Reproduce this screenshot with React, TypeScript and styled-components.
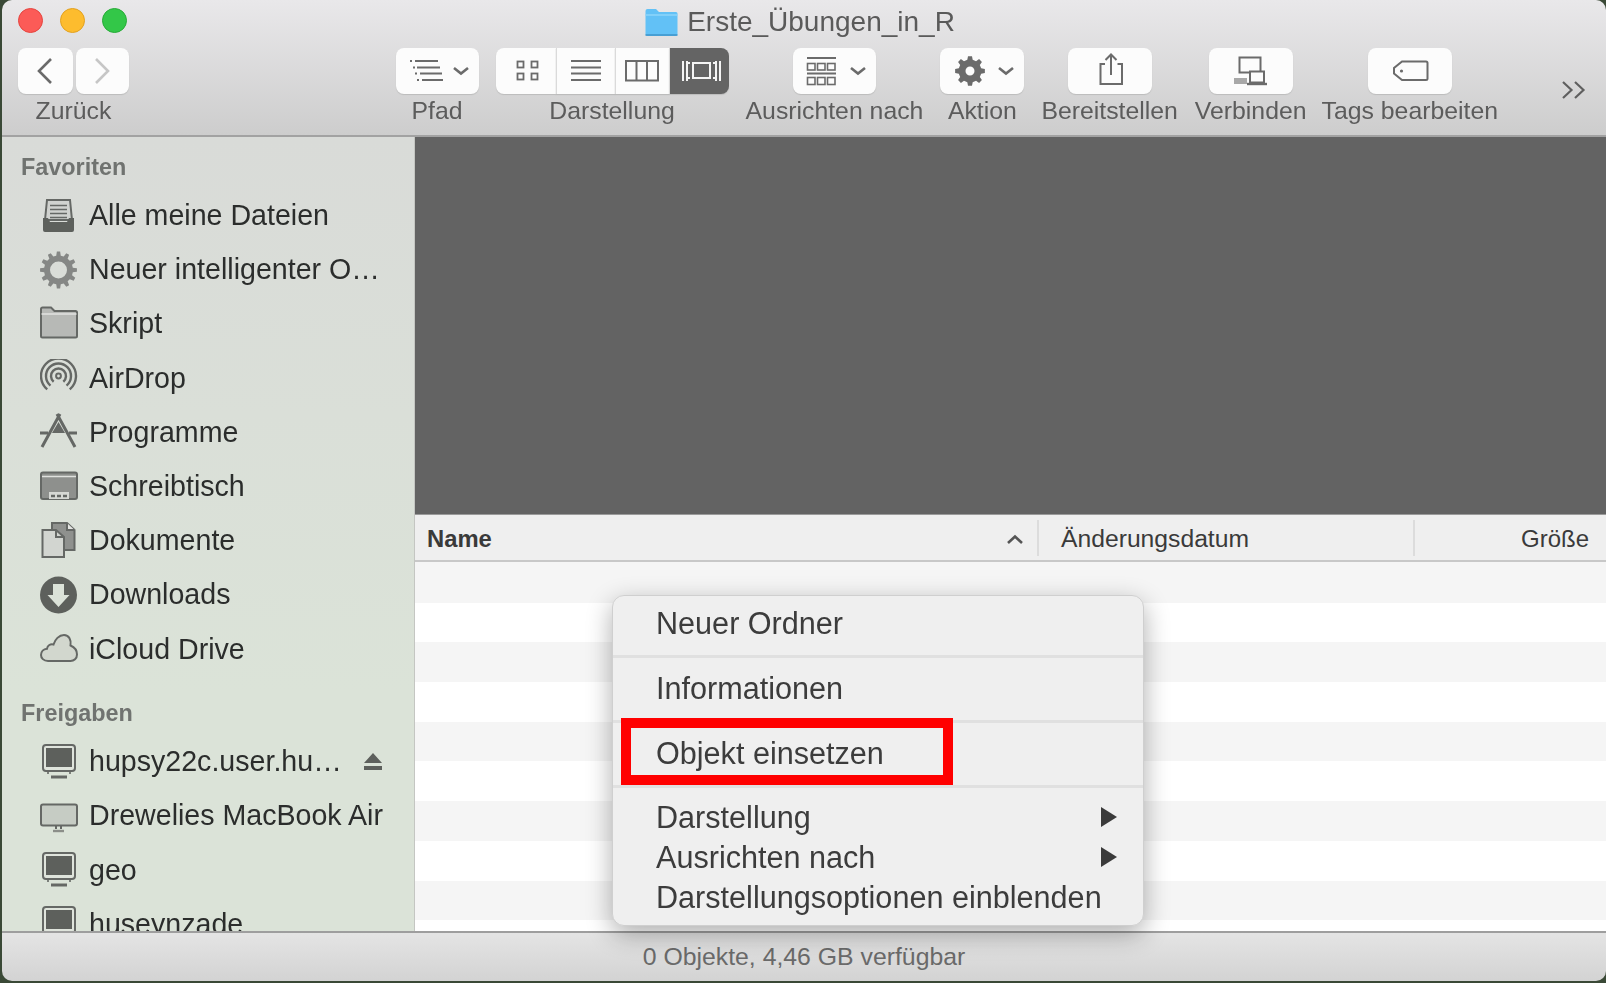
import styled, { createGlobalStyle } from "styled-components";

const ICON = "#6b6b6b";
const SIDE_ICON = "#656865";
const SIDE_DARK = "#5d605c";

const GlobalStyle = createGlobalStyle`
  html, body {
    margin: 0;
    padding: 0;
    background: #3a4936;
  }
  * {
    box-sizing: border-box;
  }
`;

const Frame = styled.div`
  position: relative;
  width: 1606px;
  height: 983px;
  overflow: hidden;
  background: #3a4936;
  font-family: "Liberation Sans", Arial, sans-serif;
`;

const Window = styled.div`
  position: relative;
  display: flex;
  flex-direction: column;
  width: 1604px;
  height: 981px;
  margin-left: 2px;
  border-radius: 10px;
  overflow: hidden;
  filter: blur(0.55px);
`;

const Toolbar = styled.header`
  display: flex;
  flex-direction: column;
  height: 137px;
  flex-shrink: 0;
  background: linear-gradient(#e9e8ea, #cdcdcd);
  border-bottom: 2px solid #a2a2a2;
`;

const TitleBar = styled.div`
  display: grid;
  grid-template-columns: 1fr auto 1fr;
  align-items: center;
  height: 48px;
  padding-left: 16px;
`;

const Lights = styled.div`
  display: flex;
  gap: 17px;
  margin-top: -7px;
`;

const Light = styled.span<{ $color: string; $edge: string }>`
  width: 25px;
  height: 25px;
  border-radius: 50%;
  background: ${({ $color }) => $color};
  border: 1px solid ${({ $edge }) => $edge};
`;

const Title = styled.div`
  display: flex;
  align-items: center;
  gap: 9px;
  margin-top: -5px;
  margin-right: 24px;
  font-size: 28px;
  color: #5a5a5a;
`;

const ToolRow = styled.div`
  display: flex;
  padding: 0 19px 0 16px;
  gap: 17px;
`;

const Spacer = styled.div`
  flex: 1;
`;

const Group = styled.div`
  display: flex;
  flex-direction: column;
  align-items: center;
`;

const TagsGroup = styled(Group)`
  margin-left: -2px;
`;

const ButtonRow = styled.div<{ $gap?: number }>`
  display: flex;
  gap: ${({ $gap }) => $gap ?? 0}px;
`;

const ToolButton = styled.div<{ $w: number; $active?: boolean; $left?: boolean; $right?: boolean; $joined?: boolean }>`
  display: block;
  width: ${({ $w }) => $w}px;
  height: 46px;
  background: ${({ $active }) => ($active ? "#646464" : "#fcfcfc")};
  border-radius: ${({ $joined, $left, $right }) =>
    $joined ? `${$left ? 8 : 0}px ${$right ? 8 : 0}px ${$right ? 8 : 0}px ${$left ? 8 : 0}px` : "8px"};
  border-left: ${({ $joined, $left }) => ($joined && !$left ? "1px solid #dadada" : "none")};
  box-shadow: 0 1px 1px #bcbcbc;

  svg {
    display: block;
  }
`;

const ToolLabel = styled.div`
  height: 30px;
  margin-top: 2px;
  font-size: 24.8px;
  line-height: 30px;
  color: #5c5c5c;
  white-space: nowrap;
`;

const More = styled.div`
  align-self: flex-start;
  margin: 33px 0 0 47px;

  svg {
    display: block;
  }
`;

const Main = styled.div`
  display: flex;
  flex: 1;
  min-height: 0;
`;

const Sidebar = styled.nav`
  width: 413px;
  flex-shrink: 0;
  padding-top: 12px;
  overflow: hidden;
  background: linear-gradient(#d9dbd8, #dbe3d8 70%);
  border-right: 1px solid #c4c6c2;
`;

const SectionLabel = styled.div<{ $spaced?: boolean }>`
  height: 36px;
  margin: ${({ $spaced }) => ($spaced ? "19px" : "0")} 0 3.5px 19px;
  font-size: 23.4px;
  font-weight: 700;
  line-height: 36px;
  color: #707370;
`;

const SideRow = styled.div`
  display: flex;
  align-items: center;
  gap: 11px;
  height: 54.2px;
  padding: 0 32px 0 38px;
  font-size: 28.6px;
  color: #2b2d2c;
  white-space: nowrap;

  svg {
    flex-shrink: 0;
  }
`;

const Eject = styled.svg`
  margin-left: auto;
`;

const Content = styled.section`
  position: relative;
  display: flex;
  flex-direction: column;
  flex: 1;
  min-width: 0;
`;

const Preview = styled.div`
  height: 378px;
  flex-shrink: 0;
  background: #636363;
  border-bottom: 1px solid #9a9a9a;
`;

const ListHeader = styled.div`
  display: grid;
  grid-template-columns: 624px 376px 1fr;
  align-items: center;
  height: 47px;
  flex-shrink: 0;
  background: #efefef;
  border-bottom: 2px solid #c8c8c8;
  color: #3a3a3a;
`;

const HeaderCell = styled.div<{ $end?: boolean; $bold?: boolean; $noRule?: boolean }>`
  display: flex;
  align-items: center;
  justify-content: ${({ $end }) => ($end ? "flex-end" : "space-between")};
  height: 36px;
  padding: 2px ${({ $end }) => ($end ? 17 : 14)}px 0 ${({ $bold }) => ($bold ? 12 : 22)}px;
  border-right: ${({ $noRule }) => ($noRule ? "none" : "2px solid #dcdcdc")};
  font-size: ${({ $bold, $end }) => ($bold ? 23.8 : $end ? 24 : 24.7)}px;
  font-weight: ${({ $bold }) => ($bold ? 700 : 400)};
`;

const Rows = styled.div`
  flex: 1;
  padding-top: 1px;
  overflow: hidden;
  background: #f5f5f5;
`;

const StripeRow = styled.div`
  height: 39.7px;

  &:nth-child(odd) {
    background: #f5f5f5;
  }
  &:nth-child(even) {
    background: #ffffff;
  }
`;

const StatusBar = styled.footer`
  display: flex;
  align-items: center;
  justify-content: center;
  height: 50px;
  flex-shrink: 0;
  background: linear-gradient(#e4e4e4, #d3d3d3);
  border-top: 2px solid #9e9e9e;
  font-size: 24.8px;
  color: #6a6a6a;
`;

const Menu = styled.div`
  position: absolute;
  left: 197px;
  top: 458px;
  width: 532px;
  height: 331px;
  background: #efefef;
  border: 1px solid #cfcfcf;
  border-radius: 12px;
  box-shadow: 0 8px 26px rgba(0, 0, 0, 0.32);
`;

const MenuSection = styled.div<{ $first?: boolean }>`
  padding: ${({ $first }) => ($first ? "7px" : "10px")} 0 12px;
  border-top: ${({ $first }) => ($first ? "none" : "3px solid #e0e0e0")};

  &:last-child {
    padding: 9px 0 0;
  }
`;

const MenuItem = styled.div`
  display: flex;
  align-items: center;
  justify-content: space-between;
  height: 40px;
  padding: 0 26px 0 43px;
  font-size: 30.6px;
  color: #3c3c3c;
  white-space: nowrap;
`;

const Arrow = styled.span`
  width: 0;
  height: 0;
  border-left: 16px solid #3a3a3a;
  border-top: 10px solid transparent;
  border-bottom: 10px solid transparent;
`;

const Highlight = styled.div`
  position: absolute;
  left: 621px;
  top: 718px;
  width: 332px;
  height: 67px;
  border: 10px solid #ff0000;
`;

const gearPath = (cx: number, cy: number, ro: number, ri: number, hole: number, n: number) => {
  let d = "";
  const step = (Math.PI * 2) / n;
  for (let i = 0; i < n; i++) {
    const a = i * step;
    const pts: [number, number][] = [
      [ri, a - step * 0.3],
      [ro, a - step * 0.17],
      [ro, a + step * 0.17],
      [ri, a + step * 0.3],
    ];
    pts.forEach(([r, t], j) => {
      const x = (cx + r * Math.sin(t)).toFixed(2);
      const y = (cy - r * Math.cos(t)).toFixed(2);
      d += `${i === 0 && j === 0 ? "M" : "L"}${x} ${y} `;
    });
  }
  d += `Z M${cx - hole} ${cy} a${hole} ${hole} 0 1 0 ${hole * 2} 0 a${hole} ${hole} 0 1 0 ${-hole * 2} 0 Z`;
  return d;
};

const arcPath = (cx: number, cy: number, r: number) => {
  const dx = (r * Math.sin(0.7)).toFixed(2);
  const dy = (r * Math.cos(0.7)).toFixed(2);
  return `M${cx - Number(dx)} ${cy + Number(dy)} A${r} ${r} 0 1 1 ${cx + Number(dx)} ${cy + Number(dy)}`;
};

const Chevron = ({ x, y = 20 }: { x: number; y?: number }) => (
  <path d={`M${x} ${y} l7 5.5 l7 -5.5`} fill="none" stroke={ICON} strokeWidth={2.6} />
);

const FolderIcon = () => (
  <svg width="33" height="30" viewBox="0 0 33 30">
    <path d="M0.5 4 a2 2 0 0 1 2 -2 H11 l3 3 H31 a1.5 1.5 0 0 1 1.5 1.5 V27 a2 2 0 0 1 -2 2 H2.5 a2 2 0 0 1 -2 -2 Z" fill="#62c1f6" />
    <path d="M0.5 8 H32.5" stroke="#8ed4fa" strokeWidth="1.5" />
    <path d="M0.5 28 H32.5" stroke="#3f93c8" strokeWidth="1.5" />
  </svg>
);

const BackIcon = () => (
  <svg width="55" height="46" viewBox="0 0 55 46">
    <path d="M33 11 L21 23 L33 35" fill="none" stroke="#6a6a6a" strokeWidth="2.6" />
  </svg>
);

const ForwardIcon = () => (
  <svg width="53" height="46" viewBox="0 0 53 46">
    <path d="M20 11 L32 23 L20 35" fill="none" stroke="#c6c6c6" strokeWidth="2.6" />
  </svg>
);

const PathIcon = () => (
  <svg width="83" height="46" viewBox="0 0 83 46">
    <g stroke={ICON} strokeWidth="2">
      <path d="M19 13 H42 M21 19.5 H44 M24 25.5 H46 M26 32 H47" />
      <path d="M14 13 h2 M17 19.5 h2 M19 25.5 h2 M21 32 h2" />
    </g>
    <Chevron x={58} />
  </svg>
);

const GridIcon = () => (
  <svg width="60" height="46" viewBox="0 0 60 46">
    <g fill="none" stroke={ICON} strokeWidth="1.8">
      <rect x="21.5" y="13.5" width="6" height="6" />
      <rect x="35.5" y="13.5" width="6" height="6" />
      <rect x="21.5" y="25.5" width="6" height="6" />
      <rect x="35.5" y="25.5" width="6" height="6" />
    </g>
  </svg>
);

const ListIcon = () => (
  <svg width="58" height="46" viewBox="0 0 58 46">
    <path d="M14 13 H44 M14 19.5 H44 M14 25.5 H44 M14 32 H44" stroke={ICON} strokeWidth="2" />
  </svg>
);

const ColumnsIcon = () => (
  <svg width="53" height="46" viewBox="0 0 53 46">
    <rect x="10" y="13" width="32" height="19.5" fill="none" stroke={ICON} strokeWidth="2" />
    <path d="M20.5 13 V32.5 M31 13 V32.5" stroke={ICON} strokeWidth="2" />
  </svg>
);

const CoverIcon = () => (
  <svg width="60" height="46" viewBox="0 0 60 46">
    <g stroke="#f4f4f4" strokeWidth="2" fill="none">
      <rect x="23" y="15" width="17" height="15" />
      <path d="M13 13 V33 M17 13 V33 M46 13 V33 M50 13 V33" />
      <path d="M17 15 H20 M17 30 H20 M43 15 H46 M43 30 H46" />
    </g>
  </svg>
);

const ArrangeIcon = () => (
  <svg width="83" height="46" viewBox="0 0 83 46">
    <g stroke={ICON} fill="none">
      <path d="M14 10 H43 M14 25.5 H43" strokeWidth="2" />
      <g strokeWidth="1.6">
        <rect x="14.5" y="15.5" width="7.5" height="6.5" />
        <rect x="24.5" y="15.5" width="7.5" height="6.5" />
        <rect x="34.5" y="15.5" width="7.5" height="6.5" />
        <rect x="14.5" y="29.5" width="7.5" height="7" />
        <rect x="24.5" y="29.5" width="7.5" height="7" />
        <rect x="34.5" y="29.5" width="7.5" height="7" />
      </g>
    </g>
    <Chevron x={58} />
  </svg>
);

const ActionIcon = () => (
  <svg width="84" height="46" viewBox="0 0 84 46">
    <path d={gearPath(30, 23, 15, 11.5, 4.5, 8)} fill={ICON} fillRule="evenodd" />
    <Chevron x={59} />
  </svg>
);

const ShareIcon = () => (
  <svg width="84" height="46" viewBox="0 0 84 46">
    <path d="M37 16 H32.5 V36 H54 V16 H49.5" fill="none" stroke={ICON} strokeWidth="2" />
    <path d="M43 27 V7 M37.5 12 L43 6.5 L48.5 12" fill="none" stroke={ICON} strokeWidth="2" />
  </svg>
);

const ConnectIcon = () => (
  <svg width="84" height="46" viewBox="0 0 84 46">
    <rect x="30.5" y="9.5" width="21" height="15" fill="none" stroke={ICON} strokeWidth="2" />
    <path d="M41 25 V28" stroke={ICON} strokeWidth="2" />
    <rect x="41" y="23.5" width="14" height="11" fill="#fcfcfc" stroke={ICON} strokeWidth="2" />
    <path d="M38 36 H58" stroke={ICON} strokeWidth="2.4" />
    <path d="M25 30 H38 V36 H25 Z" fill="#a8a8a8" />
  </svg>
);

const TagIcon = () => (
  <svg width="84" height="46" viewBox="0 0 84 46">
    <path d="M34 13.5 H58 a1.5 1.5 0 0 1 1.5 1.5 V30.5 a1.5 1.5 0 0 1 -1.5 1.5 H34 L26 25.5 V20 Z" fill="none" stroke={ICON} strokeWidth="2" />
    <circle cx="33.5" cy="23" r="1.6" fill={ICON} />
  </svg>
);

const MoreIcon = () => (
  <svg width="25" height="18" viewBox="0 0 25 18">
    <path d="M1 1 L9.5 9 L1 17 M13 1 L21.5 9 L13 17" fill="none" stroke="#5f5f5f" strokeWidth="2.2" />
  </svg>
);

const FilesIcon = () => (
  <svg width="38" height="38" viewBox="0 0 38 38">
    <path d="M7 3 H30 L32 23 H5 Z" fill="#d0d2cf" stroke={SIDE_ICON} strokeWidth="2" />
    <path d="M10 8.5 H27 M10 12.5 H27 M10 16.5 H27 M10 20.5 H27" stroke={SIDE_ICON} strokeWidth="1.6" />
    <path d="M3 21 H8 L10 25 H27 L29 21 H34 V33 a2 2 0 0 1 -2 2 H5 a2 2 0 0 1 -2 -2 Z" fill={SIDE_DARK} />
  </svg>
);

const SmartIcon = () => (
  <svg width="38" height="38" viewBox="0 0 38 38">
    <path d={gearPath(18.5, 19, 18.5, 14.5, 8.5, 12)} fill="#858785" fillRule="evenodd" />
  </svg>
);

const PlainFolderIcon = () => (
  <svg width="38" height="38" viewBox="0 0 38 38">
    <path d="M1 4 a1.5 1.5 0 0 1 1.5 -1.5 H11 l3.5 3.5 H35.5 a1.5 1.5 0 0 1 1.5 1.5 V31 a1.5 1.5 0 0 1 -1.5 1.5 H2.5 a1.5 1.5 0 0 1 -1.5 -1.5 Z" fill="#b7b9b6" stroke={SIDE_ICON} strokeWidth="2" />
    <path d="M1.5 9 H36.5" stroke="#e2e3e0" strokeWidth="1.6" />
  </svg>
);

const AirDropIcon = () => (
  <svg width="38" height="38" viewBox="0 0 38 38">
    <g fill="none" stroke={SIDE_ICON} strokeWidth="2.4">
      <path d={arcPath(18.5, 17, 17.5)} />
      <path d={arcPath(18.5, 17, 12.5)} />
      <path d={arcPath(18.5, 17, 7.5)} />
      <circle cx="18.5" cy="17" r="2.4" strokeWidth="2" />
    </g>
  </svg>
);

const AppsIcon = () => (
  <svg width="38" height="38" viewBox="0 0 38 38">
    <g stroke={SIDE_ICON} strokeWidth="3" fill="none">
      <path d="M17 1 L35 34 M20 1 L2 34" />
      <path d="M0 20 H8 M29 20 H37" />
    </g>
    <path d="M12 20 L18.5 9 L25 20 Z" fill={SIDE_ICON} />
  </svg>
);

const DesktopIcon = () => (
  <svg width="38" height="38" viewBox="0 0 38 38">
    <rect x="1" y="4.5" width="36" height="26.5" rx="2" fill="#8e908d" stroke={SIDE_ICON} strokeWidth="2" />
    <path d="M2 8.5 H36" stroke="#e0e1de" strokeWidth="1.6" />
    <rect x="9" y="24" width="20" height="7" fill="#d6d8d4" />
    <path d="M11 28 H15 M17 28 H21 M23 28 H27" stroke={SIDE_ICON} strokeWidth="2.6" />
  </svg>
);

const DocsIcon = () => (
  <svg width="38" height="38" viewBox="0 0 38 38">
    <path d="M12 1 H27 L34.5 8 V28 H12 Z" fill="#8f918e" stroke={SIDE_ICON} strokeWidth="2" />
    <path d="M27 1 V8 H34.5" fill="#e4e5e2" stroke={SIDE_ICON} strokeWidth="2" />
    <path d="M2.5 8 H16 L24 15 V35 H2.5 Z" fill="#d2d5d0" stroke={SIDE_ICON} strokeWidth="2" />
    <path d="M16 8 V15 H24" fill="none" stroke={SIDE_ICON} strokeWidth="2" />
  </svg>
);

const DownloadIcon = () => (
  <svg width="38" height="38" viewBox="0 0 38 38">
    <circle cx="18.5" cy="19" r="18.5" fill={SIDE_DARK} />
    <path d="M13 8 H24 V19 H29.5 L18.5 31 L7.5 19 H13 Z" fill="#dbe2d8" />
  </svg>
);

const CloudIcon = () => (
  <svg width="38" height="38" viewBox="0 0 38 38">
    <path d="M8 31 C3.5 31 1 28 1 25 C1 21.5 3.5 19 7 18.7 C7.5 15.5 10.5 13.5 13.5 14.5 C15 9.5 19 5 24 5 C29 5 31.5 10 30.5 15.5 C34 17 37 20.5 37 24.5 C37 28.5 34 31 30.5 31 Z" fill="#d2d7ce" stroke={SIDE_ICON} strokeWidth="2" />
  </svg>
);

const ServerIcon = () => (
  <svg width="38" height="38" viewBox="0 0 38 38">
    <rect x="3" y="2" width="32" height="26" rx="3" fill="#dfe4dc" stroke={SIDE_ICON} strokeWidth="2" />
    <rect x="6" y="5" width="26" height="19" fill={SIDE_DARK} />
    <path d="M8 28 V31 M30 28 V31" stroke={SIDE_ICON} strokeWidth="1.6" />
    <path d="M11 34 H27" stroke={SIDE_ICON} strokeWidth="3" />
  </svg>
);

const MonitorIcon = () => (
  <svg width="38" height="38" viewBox="0 0 38 38">
    <rect x="1" y="7.5" width="36" height="21" rx="2" fill="#c6ccc4" stroke={SIDE_ICON} strokeWidth="2" />
    <path d="M16 29 V32 M21 29 V32" stroke={SIDE_ICON} strokeWidth="2" />
    <path d="M13 34 H24" stroke="#8b8e89" strokeWidth="2.4" />
  </svg>
);

const favorites = [
  { label: "Alle meine Dateien", icon: <FilesIcon /> },
  { label: "Neuer intelligenter O…", icon: <SmartIcon /> },
  { label: "Skript", icon: <PlainFolderIcon /> },
  { label: "AirDrop", icon: <AirDropIcon /> },
  { label: "Programme", icon: <AppsIcon /> },
  { label: "Schreibtisch", icon: <DesktopIcon /> },
  { label: "Dokumente", icon: <DocsIcon /> },
  { label: "Downloads", icon: <DownloadIcon /> },
  { label: "iCloud Drive", icon: <CloudIcon /> },
];

const App = () => {
  return (
    <Frame>
      <GlobalStyle />
      <Window>
        <Toolbar>
          <TitleBar>
            <Lights>
              <Light $color="#fc5b57" $edge="#e5453f" />
              <Light $color="#fdbc2e" $edge="#e2a11f" />
              <Light $color="#33c748" $edge="#27ab37" />
            </Lights>
            <Title>
              <FolderIcon />
              Erste_Übungen_in_R
            </Title>
          </TitleBar>
          <ToolRow>
            <Group>
              <ButtonRow $gap={3}>
                <ToolButton $w={55}><BackIcon /></ToolButton>
                <ToolButton $w={53}><ForwardIcon /></ToolButton>
              </ButtonRow>
              <ToolLabel>Zurück</ToolLabel>
            </Group>
            <Spacer />
            <Group>
              <ToolButton $w={83}><PathIcon /></ToolButton>
              <ToolLabel>Pfad</ToolLabel>
            </Group>
            <Group>
              <ButtonRow>
                <ToolButton $w={60} $joined $left><GridIcon /></ToolButton>
                <ToolButton $w={59} $joined><ListIcon /></ToolButton>
                <ToolButton $w={54} $joined><ColumnsIcon /></ToolButton>
                <ToolButton $w={60} $joined $right $active><CoverIcon /></ToolButton>
              </ButtonRow>
              <ToolLabel>Darstellung</ToolLabel>
            </Group>
            <Group>
              <ToolButton $w={83}><ArrangeIcon /></ToolButton>
              <ToolLabel>Ausrichten nach</ToolLabel>
            </Group>
            <Group>
              <ToolButton $w={84}><ActionIcon /></ToolButton>
              <ToolLabel>Aktion</ToolLabel>
            </Group>
            <Group>
              <ToolButton $w={84}><ShareIcon /></ToolButton>
              <ToolLabel>Bereitstellen</ToolLabel>
            </Group>
            <Group>
              <ToolButton $w={84}><ConnectIcon /></ToolButton>
              <ToolLabel>Verbinden</ToolLabel>
            </Group>
            <TagsGroup>
              <ToolButton $w={84}><TagIcon /></ToolButton>
              <ToolLabel>Tags bearbeiten</ToolLabel>
            </TagsGroup>
            <More><MoreIcon /></More>
          </ToolRow>
        </Toolbar>
        <Main>
          <Sidebar>
            <SectionLabel>Favoriten</SectionLabel>
            {favorites.map((item) => (
              <SideRow key={item.label}>
                {item.icon}
                {item.label}
              </SideRow>
            ))}
            <SectionLabel $spaced>Freigaben</SectionLabel>
            <SideRow>
              <ServerIcon />
              hupsy22c.user.hu…
              <Eject width="18" height="18" viewBox="0 0 18 18">
                <path d="M9 0 L18 10 H0 Z M0 13 H18 V17 H0 Z" fill={SIDE_DARK} />
              </Eject>
            </SideRow>
            <SideRow>
              <MonitorIcon />
              Drewelies MacBook Air
            </SideRow>
            <SideRow>
              <ServerIcon />
              geo
            </SideRow>
            <SideRow>
              <ServerIcon />
              huseynzade
            </SideRow>
          </Sidebar>
          <Content>
            <Preview />
            <ListHeader>
              <HeaderCell $bold>
                Name
                <svg width="16" height="10" viewBox="0 0 16 10">
                  <path d="M1 9 L8 2.5 L15 9" fill="none" stroke="#555" strokeWidth="2.6" />
                </svg>
              </HeaderCell>
              <HeaderCell>Änderungsdatum</HeaderCell>
              <HeaderCell $end $noRule>Größe</HeaderCell>
            </ListHeader>
            <Rows>
              {Array.from({ length: 10 }).map((_, i) => (
                <StripeRow key={i} />
              ))}
            </Rows>
            <Menu>
              <MenuSection $first>
                <MenuItem>Neuer Ordner</MenuItem>
              </MenuSection>
              <MenuSection>
                <MenuItem>Informationen</MenuItem>
              </MenuSection>
              <MenuSection>
                <MenuItem>Objekt einsetzen</MenuItem>
              </MenuSection>
              <MenuSection>
                <MenuItem>
                  Darstellung
                  <Arrow />
                </MenuItem>
                <MenuItem>
                  Ausrichten nach
                  <Arrow />
                </MenuItem>
                <MenuItem>Darstellungsoptionen einblenden</MenuItem>
              </MenuSection>
            </Menu>
          </Content>
        </Main>
        <StatusBar>0 Objekte, 4,46 GB verfügbar</StatusBar>
      </Window>
      <Highlight />
    </Frame>
  );
};

export default App;
